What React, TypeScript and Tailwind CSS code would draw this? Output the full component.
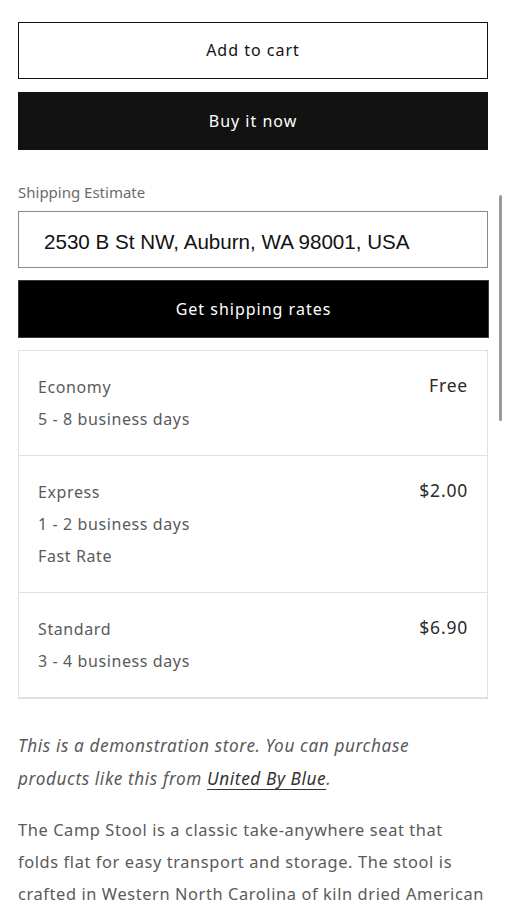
import React from "react";

const rates = [
  { name: "Economy", price: "Free", lines: ["5 - 8 business days"] },
  { name: "Express", price: "$2.00", lines: ["1 - 2 business days", "Fast Rate"] },
  { name: "Standard", price: "$6.90", lines: ["3 - 4 business days"] },
];

export default function App() {
  return (
    <div className="relative w-[506px] h-[900px] overflow-hidden bg-white" style={{ fontFamily: '"Noto Sans", "Open Sans", sans-serif' }}>
      <div className="px-[18px] pt-[22px] pr-[18px]">
        <button className="w-[470px] h-[57px] border border-[#121212] bg-white text-[#121212] text-[16px] tracking-[1px] pb-[2px]">
          Add to cart
        </button>
        <button className="mt-[13px] w-[470px] h-[58px] bg-[#121212] text-white text-[16px] tracking-[1px]">
          Buy it now
        </button>
        <div className="mt-[31px] text-[15px] leading-[22px] text-[#6b6b6b]">Shipping Estimate</div>
        <div className="mt-[8px] w-[470px] h-[57px] border border-[#8a8a8a] flex items-center pl-[25px] pt-[5px] text-[20.6px] text-[#121212]" style={{ fontFamily: '"Liberation Sans", Arial, sans-serif' }}>
          2530 B St NW, Auburn, WA 98001, USA
        </div>
        <button className="mt-[12px] w-[471px] h-[58px] bg-black border border-[#3a3a3a] text-white text-[16px] tracking-[1px]">
          Get shipping rates
        </button>
        <div className="mt-[12px] w-[470px] border border-[#e1e1e1] border-b-2">
          {rates.map((r, i) => (
            <div key={r.name} className={`flex justify-between pl-[19px] pr-[19px] py-[20px] ${i > 0 ? "border-t border-[#e1e1e1]" : ""}`}>
              <div className="text-[16px] leading-[32px] tracking-[0.6px] text-[#5a5a5a]">
                <div>{r.name}</div>
                {r.lines.map((l) => (
                  <div key={l}>{l}</div>
                ))}
              </div>
              <div className="text-[17.5px] leading-[28px] tracking-[0.8px] text-[#2a2a2a]">{r.price}</div>
            </div>
          ))}
        </div>
        <p className="mt-[30px] w-[450px] italic text-[17.2px] leading-[33px] tracking-[0.6px] text-[#5a5a5a]">
          This is a demonstration store. You can purchase products like this from{" "}
          <span className="underline underline-offset-[4px] text-[#333]">United By Blue</span>.
        </p>
        <p className="mt-[19px] w-[470px] text-[16.4px] leading-[32px] tracking-[0.6px] text-[#5a5a5a]">
          The Camp Stool is a classic take-anywhere seat that folds flat for easy transport and storage. The stool is crafted in Western North Carolina of kiln dried American hardwood.
        </p>
      </div>
      <div className="absolute left-[499px] top-[195px] w-[3px] h-[226px] rounded-full bg-[#9a9a9a]" />
    </div>
  );
}
